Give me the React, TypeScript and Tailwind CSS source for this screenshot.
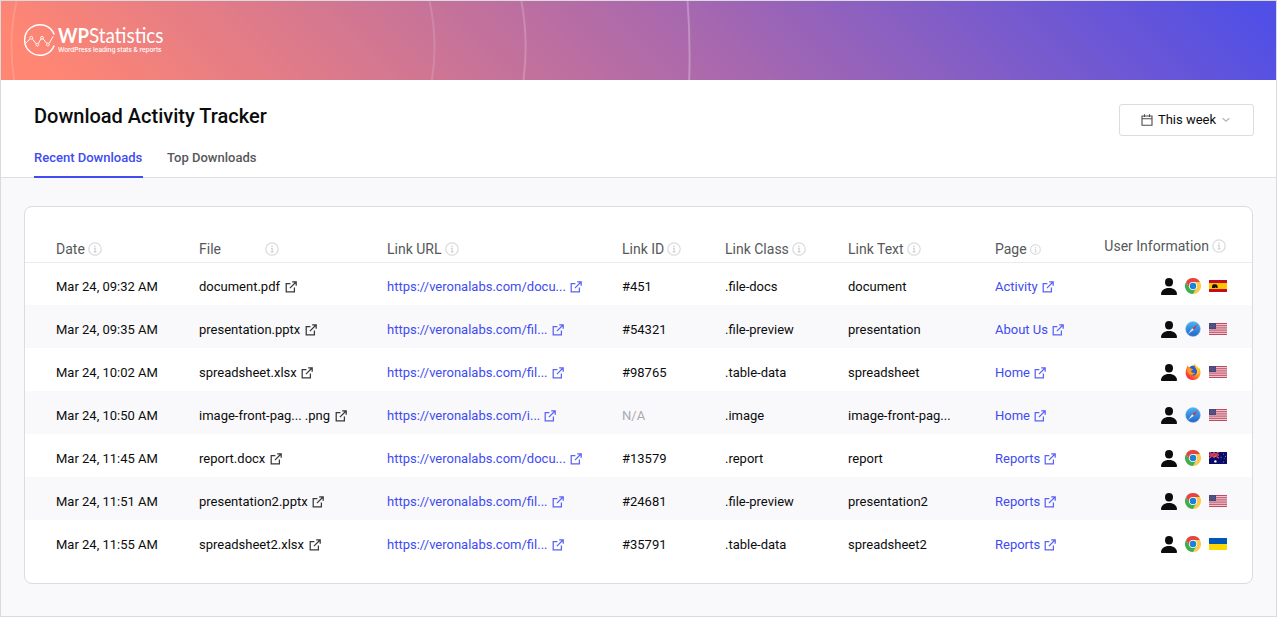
import React from "react";

const columns = "grid grid-cols-[143px_188px_235px_103px_123px_147px_1fr] pl-[31px]";

function InfoIcon({ small = false }: { small?: boolean }) {
  return (
    <svg className={small ? "size-[11px] shrink-0" : "size-[14px] shrink-0"} viewBox="0 0 14 14" fill="none" stroke="#dcdce0" strokeWidth="1.3">
      <circle cx="7" cy="7" r="6.2" />
      <path d="M5.9 6.4h1.3v3.4M5.7 9.9h2.8" stroke="#cfcfd4" strokeWidth="1.1" />
      <circle cx="7" cy="4.3" r=".8" fill="#cfcfd4" stroke="none" />
    </svg>
  );
}

function ExternalIcon({ muted = false }: { muted?: boolean }) {
  return (
    <svg className={muted ? "mb-px size-3 shrink-0 text-[#38383b]" : "mb-px size-3 shrink-0 text-[#5a63f3]"} viewBox="0 0 12 12" fill="none" stroke="currentColor" strokeWidth="1.25">
      <path d="M5.400 2.700H1.200v8.200h8.200V6.600" />
      <path d="M7.200.8h4v4M11 1 4.900 7.100" />
    </svg>
  );
}

function UserIcon() {
  return (
    <svg className="mt-px h-[17px] w-4" viewBox="0 0 16 17" fill="#0c0c0d">
      <ellipse cx="8" cy="4.3" rx="4" ry="4.2" />
      <path d="M0 16.2C0 12.6 3.2 10 8 10s8 2.6 8 6.2c0 .5-.3.8-.8.8H.8c-.5 0-.8-.3-.8-.8Z" />
    </svg>
  );
}

function Chrome() {
  return (
    <svg className="size-4" viewBox="0 0 48 48">
      <path fill="#fcc94a" d="M34.4 18 24 12h20.8A24 24 0 0 1 24 48l10.4-18Z" />
      <path fill="#3fae4e" d="M13.6 30 3.2 12A24 24 0 0 0 24 48l10.4-18Z" />
      <path fill="#e6443c" d="M24 12h20.8A24 24 0 0 0 3.2 12l10.4 18Z" />
      <circle cx="24" cy="24" r="12" fill="#fff" />
      <circle cx="24" cy="24" r="9.8" fill="#1a83d8" />
    </svg>
  );
}

function Safari() {
  return (
    <svg className="size-4" viewBox="0 0 32 32">
      <defs>
        <linearGradient id="safari" x1="0" y1="0" x2="0" y2="1">
          <stop stopColor="#46b5f5" />
          <stop offset="1" stopColor="#2465c8" />
        </linearGradient>
      </defs>
      <circle cx="16" cy="16" r="14.8" fill="url(#safari)" stroke="#8fb6e3" />
      <path fill="#e62c30" d="m26 6-11.500 8.500 3 3Z" />
      <path fill="#e9edf6" d="m6 26 8.500-11.500 3 3Z" />
    </svg>
  );
}

function Firefox() {
  return (
    <svg className="size-4" viewBox="0 0 32 32">
      <defs>
        <linearGradient id="fox" x1="1" y1="0" x2=".1" y2=".9">
          <stop stopColor="#ffe21f" />
          <stop offset=".45" stopColor="#ffa01f" />
          <stop offset=".8" stopColor="#ff4a32" />
          <stop offset="1" stopColor="#ee2354" />
        </linearGradient>
      </defs>
      <path fill="url(#fox)" d="M3 9 5 3l3 4c2-2 5-4 8-4l3-3c2 4 7 6 9 9l1-1c5 11 1 23-12 24C5 33-2 21 3 9Z" />
      <path fill="#2a5fd0" d="M10 6c3-3 7-3 10-1l4 6c2 6-1 11-7 12-6 0-9-4-9-9Z" />
      <path fill="#ff9a1c" d="M5 9c3-2 5-2 7 0l4 1.500c0 2-3 2-4 4 1 3 5 4 8 2-2 5-7 7-11 4-4-3-6-7-4-11.500Z" />
      <path fill="#ffc928" d="M20 1c-1 3 0 5 2 8 3 5 3 9 0 13 5-1 8-6 6-12-2-3-6-5-8-9Z" />
    </svg>
  );
}

function Flag({ code }: { code: string }) {
  return (
    <svg className="h-3 w-[18px]" viewBox="0 0 18 12">
      {code === "es" && (
        <>
          <path fill="#c60b1e" d="M0 0h18v12H0z" />
          <path fill="#ffc400" d="M0 3h18v6H0z" />
          <path fill="#17120a" d="M3 8V5.700L4.200 4.300h3L8.600 5.700V8H7.300L6.600 7.200l-.7.800Z" />
        </>
      )}
      {code === "us" && (
        <>
          <path fill="#f5e9ec" d="M0 0h18v12H0z" />
          <path stroke="#b93a52" strokeWidth=".95" d="M0 .46h18M0 2.3h18M0 4.15h18M0 6h18M0 7.85h18M0 9.7h18M0 11.54h18" />
          <path fill="#454478" d="M0 0h7v6H0z" />
          <path stroke="#8b8aae" strokeWidth=".6" strokeDasharray=".6 .9" d="M.6 1.2h6M1.3 2.4h5M.6 3.6h6M1.3 4.8h5" />
        </>
      )}
      {code === "au" && (
        <>
          <path fill="#0a0a68" d="M0 0h18v12H0z" />
          <path stroke="#c9a5c4" strokeWidth="1.1" d="m0 0 10 6M10 0 0 6M5 0v6M0 3h10" />
          <path stroke="#dc2238" strokeWidth="1" d="m0 0 10 6M10 0 0 6M5 0v6M0 3h10" />
          <circle cx="6.4" cy="9.4" r="1.2" fill="#fff" />
          <path stroke="#a6a6d0" strokeWidth=".8" d="M13.9 2h1M11.6 5.3h1M16 4.4h1M14.9 6.5h.6M13.9 10h1" />
        </>
      )}
      {code === "ua" && (
        <>
          <path fill="#0057b8" d="M0 0h18v6H0z" />
          <path fill="#ffd700" d="M0 6h18v6H0z" />
        </>
      )}
    </svg>
  );
}

const browsers: Record<string, () => React.JSX.Element> = { chrome: Chrome, safari: Safari, firefox: Firefox };

const rows = [
  ["09:32", "document.pdf", "docu...", "#451", ".file-docs", "document", "Activity", "chrome", "es"],
  ["09:35", "presentation.pptx", "fil...", "#54321", ".file-preview", "presentation", "About Us", "safari", "us"],
  ["10:02", "spreadsheet.xlsx", "fil...", "#98765", ".table-data", "spreadsheet", "Home", "firefox", "us"],
  ["10:50", "image-front-pag... .png", "i...", "N/A", ".image", "image-front-pag...", "Home", "safari", "us"],
  ["11:45", "report.docx", "docu...", "#13579", ".report", "report", "Reports", "chrome", "au"],
  ["11:51", "presentation2.pptx", "fil...", "#24681", ".file-preview", "presentation2", "Reports", "chrome", "us"],
  ["11:55", "spreadsheet2.xlsx", "fil...", "#35791", ".table-data", "spreadsheet2", "Reports", "chrome", "ua"],
];

function Logo() {
  return (
    <svg className="h-[34px] w-[150px] overflow-visible" viewBox="0 0 150 34" fill="none">
      <path d="M31.2 11.6A15.3 15.3 0 1 0 31.2 22.4" stroke="#fff" strokeWidth="1.5" />
      <path d="m2.500 20.600 4.600-4.900M9.600 16.200l3.600 4.600M15.400 20.400l2.800-4.800M20.100 15.800l3.700 4.600M26.200 20.300l4-7" stroke="#fff" strokeWidth="1" />
      <g stroke="#fff" strokeWidth=".9">
        <circle cx="8.3" cy="14.8" r="1.4" />
        <circle cx="14.3" cy="21.7" r="1.4" />
        <circle cx="19" cy="14.8" r="1.4" />
        <circle cx="24.8" cy="21.5" r="1.4" />
      </g>
      <g fill="#fff" fontFamily="Lato, sans-serif">
        <text x="35" y="19.8" fontSize="20.5" fontWeight="700" textLength="31" lengthAdjust="spacingAndGlyphs">WP</text>
        <text x="66" y="19.8" fontSize="20.5" textLength="74.5" lengthAdjust="spacingAndGlyphs">Statistics</text>
        <text x="35" y="28.8" fontSize="6.5" fontFamily="Inter, sans-serif" fontWeight="500" textLength="103.5">WordPress leading stats &amp; reports</text>
      </g>
    </svg>
  );
}

function HeaderCell({ label, wide = false, small = false }: { label: string; wide?: boolean; small?: boolean }) {
  return (
    <div className="flex items-center gap-[3px]">
      <span className={wide ? "w-[63px]" : ""}>{label}</span>
      <InfoIcon small={small} />
    </div>
  );
}

export default function App() {
  return (
    <div className="flex h-[617px] w-[1277px] flex-col overflow-hidden border border-[#d9dade] bg-[#f9f9fb] font-[Roboto,sans-serif] text-[13px] text-[#0c0c0d]">
      <header className="relative h-[79px] shrink-0 bg-[linear-gradient(45deg,#ff8673_4%,#a868ae_55%,#504fe6_98%)] pt-[22px] pl-[22px]">
        <svg className="absolute inset-0 h-[79px] w-[1275px]" viewBox="1 1 1275 79" fill="none" stroke="#fff" strokeWidth="2">
          <circle cx="223" cy="47" r="211.5" strokeOpacity=".14" />
          <path d="M521.200 0A255.500 255.500 0 0 1 523.500 80" strokeOpacity=".2" />
          <path d="M687.500 0Q690.500 40 689.200 80" strokeOpacity=".27" />
        </svg>
        <div className="relative"><Logo /></div>
      </header>

      <section className="flex h-[98px] shrink-0 justify-between border-b border-[#dfdfe3] bg-white pr-[22px] pl-[33px]">
        <div className="flex flex-col">
          <h1 className="mt-[21px] text-[20px] leading-[30px] font-medium">Download Activity Tracker</h1>
          <nav className="mt-auto -mb-px flex gap-6 text-[13px] leading-5 font-medium">
            <a className="w-[109px] border-b-2 border-[#404bf2] pb-[8px] text-[#404bf2]">Recent Downloads</a>
            <a className="text-[#56585a]">Top Downloads</a>
          </nav>
        </div>
        <button className="mt-6 flex h-8 w-[135px] items-center justify-center rounded-[3px] border border-[#dadce0] bg-white pr-[2px] text-[13px]">
          <svg className="mr-[5px] size-3" viewBox="0 0 12 12" fill="none" stroke="#4c4c50" strokeWidth="1.1">
            <path d="M1 2h10v9.200H1zM1 4.800h10M3.500.3v2.600M8.500.3v2.600" />
          </svg>
          This week
          <svg className="ml-[6px] h-2 w-2" viewBox="0 0 8 8" fill="none" stroke="#b4b4b9" strokeWidth="1.2">
            <path d="m.7 2.300 3.300 3 3.300-3" />
          </svg>
        </button>
      </section>

      <main className="mx-[23px] mt-[28px] h-[378px] rounded-lg border border-[#dadce0] bg-white">
        <div className={`${columns} -mb-px h-14 border-b border-[#eaebee] pt-[29px] text-[14px] leading-[26px] text-[#56585a]`}>
          <HeaderCell label="Date" />
          <HeaderCell label="File" wide />
          <HeaderCell label="Link URL" />
          <HeaderCell label="Link ID" />
          <HeaderCell label="Link Class" />
          <HeaderCell label="Link Text" />
          <div className="flex justify-between pr-[26px]">
            <HeaderCell label="Page" small />
            <div className="-mt-[3px] mb-[3px]"><HeaderCell label="User Information" /></div>
          </div>
        </div>
        {rows.map(([time, file, path, id, cls, text, page, browser, flag]) => {
          const Browser = browsers[browser];
          return (
            <div key={time} className={`${columns} h-[43px] items-center pt-[7px] odd:bg-[#f9f9fb]`}>
              <span>Mar 24, {time} AM</span>
              <span className="flex items-center gap-[4.5px]">{file}<ExternalIcon muted /></span>
              <a className="flex items-center gap-[4px] text-[#404bf2]">https://veronalabs.com/{path}<ExternalIcon /></a>
              <span className={id === "N/A" ? "text-[#a9aaae]" : ""}>{id}</span>
              <span>{cls}</span>
              <span>{text}</span>
              <div className="flex items-center justify-between pr-[25px]">
                <a className="flex items-center gap-[4px] text-[#404bf2]">{page}<ExternalIcon /></a>
                <div className="mb-[3px] flex items-center gap-2">
                  <UserIcon />
                  <Browser />
                  <Flag code={flag} />
                </div>
              </div>
            </div>
          );
        })}
      </main>
    </div>
  );
}
